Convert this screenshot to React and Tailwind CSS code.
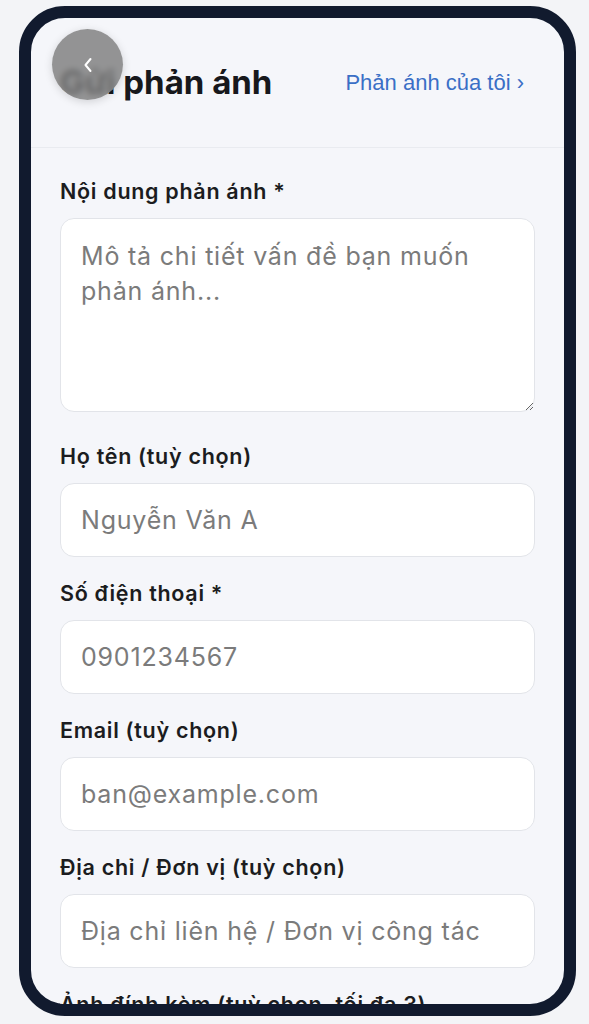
import React from "react";

const fields = [
  { label: "Họ tên (tuỳ chọn)", placeholder: "Nguyễn Văn A" },
  { label: "Số điện thoại *", placeholder: "0901234567" },
  { label: "Email (tuỳ chọn)", placeholder: "ban@example.com" },
  { label: "Địa chỉ / Đơn vị (tuỳ chọn)", placeholder: "Địa chỉ liên hệ / Đơn vị công tác" },
];

const Label = ({ children }) => (
  <label className="block text-[21.5px] leading-[24px] font-semibold tracking-[0.7px] text-[#1b1c20] mb-[15px] whitespace-nowrap">
    {children}
  </label>
);

const App = () => {
  return (
    <div
      className="w-[589px] h-[1024px] bg-[#f3f4f7] pt-[6px] pl-[19px] overflow-hidden"
      style={{ fontFamily: "Inter, 'Noto Sans', sans-serif" }}
    >
      {/* Phone frame */}
      <div className="w-[557px] h-[1010px] border-[12px] border-[#111a2e] rounded-[46px] overflow-hidden bg-[#f5f6fa]">
        <div className="relative">
          {/* Header */}
          <div className="h-[130px] flex items-center justify-between pl-[29px] pr-[40px] border-b border-[#e9ebf0]">
            <h1 className="text-[33px] font-bold text-[#17181c]">Gửi phản ánh</h1>
            <a
              className="text-[22px] text-[#3a6fc6]"
              style={{ fontFamily: "'Liberation Sans', Arial, sans-serif" }}
            >
              Phản ánh của tôi ›
            </a>
          </div>

          {/* Floating back button */}
          <button className="absolute left-[21px] top-[11px] w-[71px] h-[71px] rounded-full bg-[#7a7a7a]/80 backdrop-blur-[3px] shadow-[0_2px_8px_rgba(0,0,0,0.15)] flex items-center justify-center">
            <svg width="10" height="16" viewBox="0 0 10 16" fill="none">
              <path d="M7.5 2 L2.5 8 L7.5 14" stroke="white" strokeWidth="2" strokeLinecap="round" strokeLinejoin="round" />
            </svg>
          </button>

          {/* Form */}
          <div className="px-[29px] pt-[31px]">
            <div className="mb-[32px]">
              <Label>Nội dung phản ánh *</Label>
              <textarea
                rows={4}
                placeholder="Mô tả chi tiết vấn đề bạn muốn phản ánh..."
                className="block w-full h-[194px] rounded-[14px] border border-[#e2e4e9] bg-white px-[20px] py-[20px] text-[25px] leading-[35px] tracking-[0.8px] text-[#1b1c20] placeholder:text-[#7b7b7b] outline-none"
              />
            </div>

            {fields.map((f) => (
              <div key={f.label} className="mb-[24px]">
                <Label>{f.label}</Label>
                <input
                  placeholder={f.placeholder}
                  className="block w-full h-[74px] rounded-[14px] border border-[#e2e4e9] bg-white px-[20px] text-[25px] tracking-[0.8px] text-[#1b1c20] placeholder:text-[#7b7b7b] outline-none"
                />
              </div>
            ))}

            <Label>Ảnh đính kèm (tuỳ chọn, tối đa 3)</Label>
          </div>
        </div>
      </div>
    </div>
  );
};

export default App;
